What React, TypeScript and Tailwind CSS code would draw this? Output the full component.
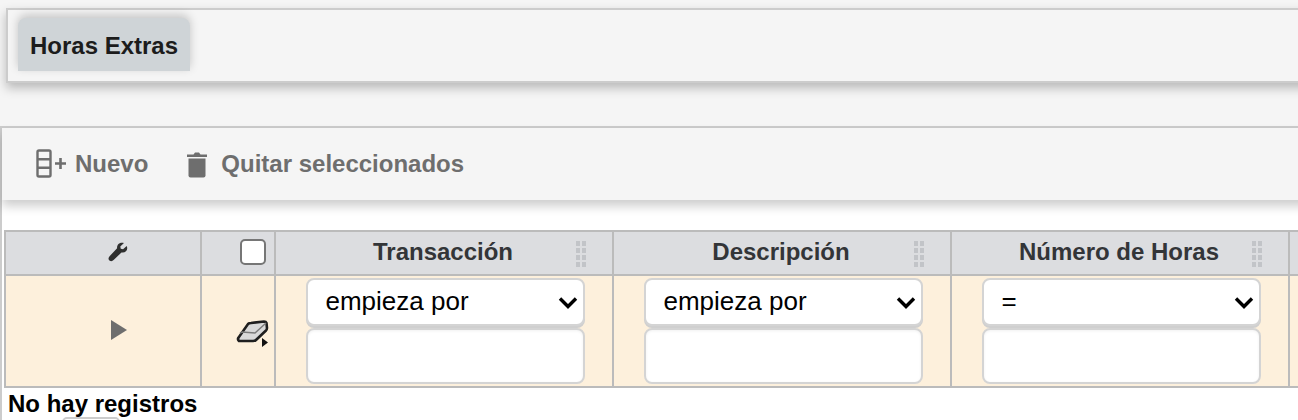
import { ChangeEvent, useState } from "react";

const filterCols = [
  { id: "transaccion", title: "Transacción", op: "empieza por" },
  { id: "descripcion", title: "Descripción", op: "empieza por" },
  { id: "horas", title: "Número de Horas", op: "=" },
];

function GripDots() {
  return (
    <svg width="12" height="28" viewBox="0 0 12 28" className="absolute right-[25px] top-[8px]">
      {[0, 1, 2, 3].map((r) =>
        [0, 1].map((c) => (
          <rect key={`${r}-${c}`} x={1 + c * 6} y={1 + r * 7} width="4" height="5" fill="#c2c4c8" />
        ))
      )}
    </svg>
  );
}

function FilterCell({ op }: { op: string }) {
  const [value, setValue] = useState(op);
  return (
    <div className="flex flex-col items-center pt-[2px] pl-[2px] gap-[2px]">
      <div className="relative w-[279px] h-[48px]">
        <select
          value={value}
          onChange={(e: ChangeEvent<HTMLSelectElement>) => setValue(e.target.value)}
          className="appearance-none w-full h-full bg-white border-2 border-[#d4d4d4] rounded-[8px] pl-[18px] pb-[2px] text-[26px] text-black shadow-[0_2px_0_#cfcfcf]"
        >
          <option>empieza por</option>
          <option>=</option>
        </select>
        <svg width="20" height="14" viewBox="0 0 20 14" className="absolute right-[7px] top-[18px]">
          <path d="M2 2.5 L10 10.5 L18 2.5" fill="none" stroke="#000" strokeWidth="3.4" />
        </svg>
      </div>
      <input className="w-[279px] h-[56px] bg-white border-2 border-[#d4d4d4] rounded-[8px] shadow-[inset_0_1px_3px_rgba(0,0,0,0.06)]" />
    </div>
  );
}

export default function App() {
  return (
    <div className="w-[1298px] h-[420px] overflow-hidden bg-[#f5f5f5] font-['Liberation_Sans',Arial,sans-serif]">
      <div className="pt-[8px] pl-[6px] h-[126px]">
        <div className="w-[1320px] h-[75px] bg-[#f5f5f5] border-2 border-[#cccccc] pt-[8px] pl-[10px] shadow-[0_5px_10px_rgba(0,0,0,0.25)]">
          <div className="w-[172px] h-[53px] bg-[#cfd4d7] rounded-t-[8px] flex items-center justify-center pt-[2px] text-[24px] font-bold text-[#1c1c1c] shadow-[0_-3px_10px_rgba(0,0,0,0.2)]">
            Horas Extras
          </div>
        </div>
      </div>

      <div className="w-[1320px] h-[294px] bg-white border-l-2 border-t-2 border-[#cccccc]">
        <div className="h-[72px] bg-[#f5f5f5] flex items-center pl-[34px] text-[24px] font-bold text-[#6e6e6e] shadow-[0_6px_10px_rgba(0,0,0,0.2)]">
          <svg width="32" height="30" viewBox="0 0 32 30" className="mr-[7px]">
            <rect x="1.5" y="1.5" width="13" height="26" rx="1.5" fill="none" stroke="#6e6e6e" strokeWidth="2.4" />
            <path d="M1.5 10.2H14.5M1.5 18.8H14.5" stroke="#6e6e6e" strokeWidth="2.4" />
            <path d="M19 14.5H30M24.5 9V20" stroke="#6e6e6e" strokeWidth="2.6" />
          </svg>
          <span className="mr-[38px]">Nuevo</span>
          <svg width="22" height="27" viewBox="0 0 22 27" className="mr-[13px]">
            <path d="M1 3.5H7.5L9 1.5H13L14.5 3.5H21V6H1Z" fill="#6e6e6e" />
            <path d="M2.5 7.5H19.5V24.5Q19.5 26.5 17.5 26.5H4.5Q2.5 26.5 2.5 24.5Z" fill="#6e6e6e" />
          </svg>
          <span>Quitar seleccionados</span>
        </div>

        <div className="pt-[30px] pl-[2px]">
          <div className="grid grid-cols-[196px_74px_338px_338px_338px_30px] w-fit border-y-2 border-l-2 border-[#bbbbbb]">
            <div className="h-[42px] bg-[#dcdde0] border-r-2 border-[#bbbbbb] flex items-center justify-center pl-[30px] pb-[2px]">
              <svg width="22" height="22" viewBox="0 0 24 24">
                <path
                  d="M21.5 5.5 L17.5 9 L15 8.5 L14.5 6 L18.5 2.2 C14.5 0.8 10.5 3.5 11 8 L2.8 16.6 C1 18.5 1.5 20.5 3 21.5 C4.5 22.5 6 22 7.5 20.5 L15.8 12.5 C20 13.5 23.5 10 21.5 5.5 Z"
                  fill="#2f2f2f"
                />
              </svg>
            </div>
            <div className="h-[42px] bg-[#dcdde0] border-r-2 border-[#bbbbbb] flex items-center justify-end pr-[8px] pb-[2px]">
              <input
                type="checkbox"
                className="appearance-none w-[26px] h-[26px] bg-white border-2 border-[#767676] rounded-[5px]"
              />
            </div>
            {filterCols.map((col) => (
              <div
                key={col.id}
                className="relative h-[42px] bg-[#dcdde0] border-r-2 border-[#bbbbbb] flex items-center justify-center pr-[2px] pb-[2px] text-[24px] font-bold text-[#333538]"
              >
                {col.title}
                <GripDots />
              </div>
            ))}
            <div className="h-[42px] bg-[#dcdde0]" />

            <div className="h-[112px] bg-[#fdf0dc] border-t-2 border-r-2 border-[#bbbbbb] flex items-center justify-center pl-[32px]">
              <svg width="16" height="20" viewBox="0 0 16 20" className="mb-[2px]">
                <path d="M0 0L16 10L0 20Z" fill="#6e6e6e" />
              </svg>
            </div>
            <div className="relative h-[112px] bg-[#fdf0dc] border-t-2 border-r-2 border-[#bbbbbb]">
              <svg width="34" height="34" viewBox="0 0 34 34" className="absolute left-[34px] top-[41px]">
                <path
                  d="M3 24 Q1 22 3 20 L12 7 Q13 6 15 6 L28 4.5 Q30 4.5 30.5 6 L31 11 Q31 12.5 30 13.5 L20 23 Q19 24 17 24 Z"
                  fill="#d9d9d9"
                  stroke="#1f1f1f"
                  strokeWidth="2.6"
                />
                <path d="M4 16 L6 15 L19 16 L30 6" fill="none" stroke="#7a7a7a" strokeWidth="1.4" />
                <path d="M26 21 L32 25.5 L26 30 Z" fill="#111" />
              </svg>
            </div>
            {filterCols.map((col) => (
              <div key={col.id} className="h-[112px] bg-[#fdf0dc] border-t-2 border-r-2 border-[#bbbbbb]">
                <FilterCell op={col.op} />
              </div>
            ))}
            <div className="h-[112px] bg-[#fdf0dc] border-t-2 border-[#bbbbbb]" />
          </div>
          <div className="pl-[4px] pt-[3px] text-[24px] leading-[26px] font-bold text-black">No hay registros</div>
          <div className="ml-[58px] w-[58px] h-[10px] border-2 border-[#cccccc] rounded-[8px] bg-white" />
        </div>
      </div>
    </div>
  );
}
